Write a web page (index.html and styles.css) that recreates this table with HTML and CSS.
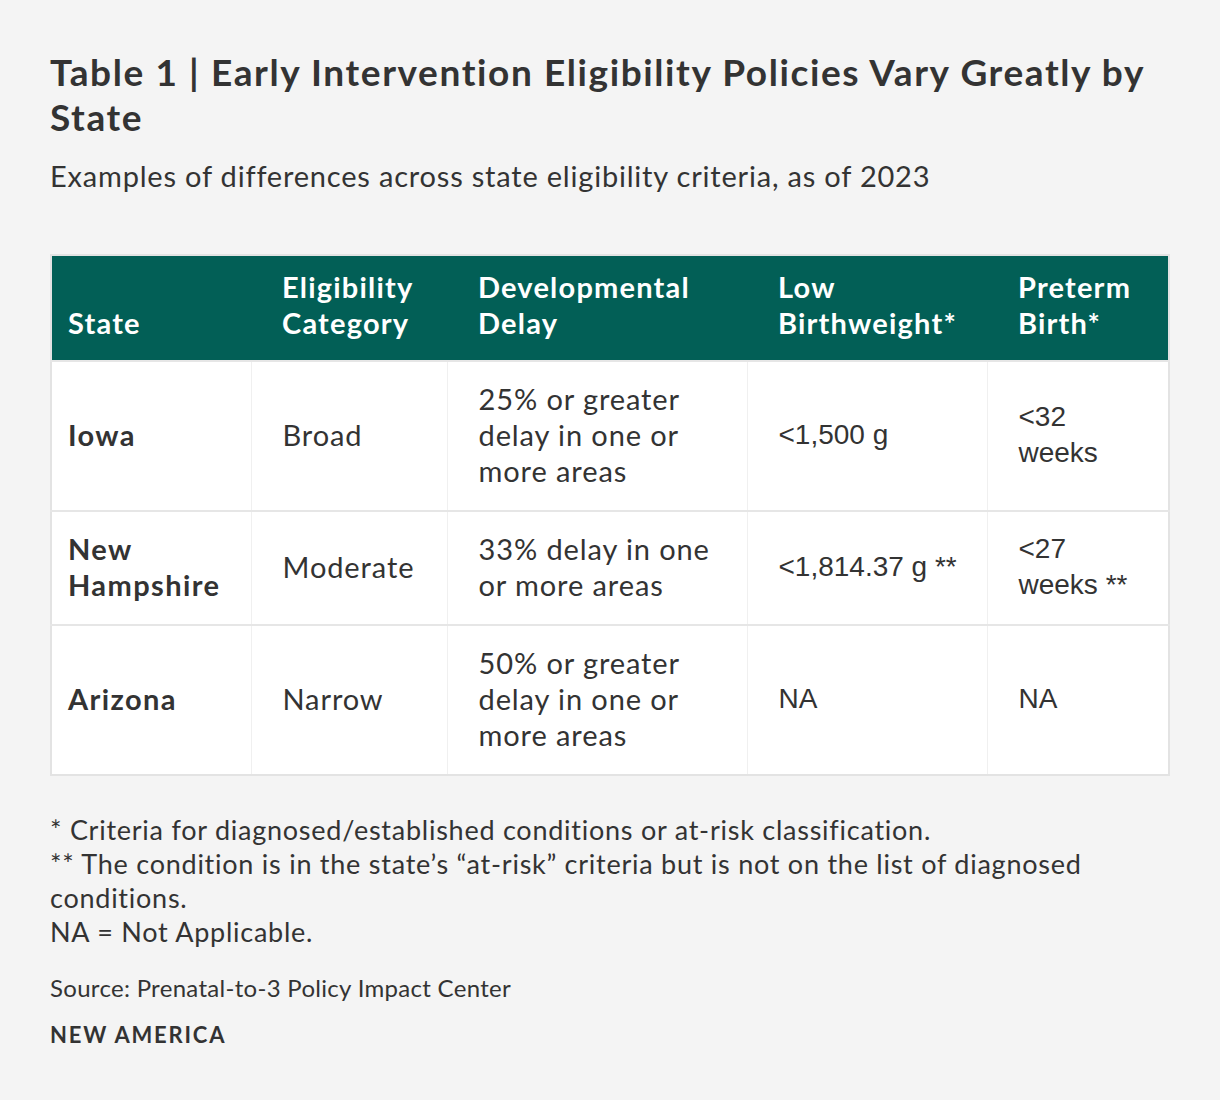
FILE: index.html
```html
<!DOCTYPE html>
<html lang="en">
<head>
<meta charset="utf-8">
<title>Table 1 | Early Intervention Eligibility Policies Vary Greatly by State</title>
<link rel="stylesheet" href="styles.css">
</head>
<body>
<div class="page">
  <h1 class="title">Table 1 | Early Intervention Eligibility Policies Vary Greatly by State</h1>
  <p class="subtitle">Examples of differences across state eligibility criteria, as of 2023</p>
  <table class="data">
    <colgroup>
      <col class="c1"><col class="c2"><col class="c3"><col class="c4"><col class="c5">
    </colgroup>
    <thead>
      <tr>
        <th>State</th>
        <th>Eligibility Category</th>
        <th>Developmental Delay</th>
        <th>Low Birthweight*</th>
        <th>Preterm Birth*</th>
      </tr>
    </thead>
    <tbody>
      <tr>
        <td class="state">Iowa</td>
        <td>Broad</td>
        <td>25% or greater delay in one or more areas</td>
        <td class="num">&lt;1,500 g</td>
        <td class="num">&lt;32 weeks</td>
      </tr>
      <tr>
        <td class="state">New Hampshire</td>
        <td>Moderate</td>
        <td>33% delay in one or more areas</td>
        <td class="num">&lt;1,814.37 g **</td>
        <td class="num">&lt;27 weeks **</td>
      </tr>
      <tr>
        <td class="state">Arizona</td>
        <td>Narrow</td>
        <td>50% or greater delay in one or more areas</td>
        <td class="num">NA</td>
        <td class="num">NA</td>
      </tr>
    </tbody>
  </table>
  <div class="notes">
    <p>* Criteria for diagnosed/established conditions or at-risk classification.</p>
    <p>** The condition is in the state’s “at-risk” criteria but is not on the list of diagnosed conditions.</p>
    <p>NA = Not Applicable.</p>
  </div>
  <p class="source">Source: Prenatal-to-3 Policy Impact Center</p>
  <p class="brand">NEW AMERICA</p>
</div>
</body>
</html>
```

FILE: styles.css
```css
html, body {
  margin: 0;
  padding: 0;
  background: #f4f4f4;
}

body {
  font-family: "Lato", "Noto Sans", sans-serif;
  color: #333333;
}

.page {
  width: 1120px;
  padding: 49px 50px 40px 50px;
}

.title {
  margin: 0;
  font-size: 37px;
  line-height: 45px;
  font-weight: 700;
  letter-spacing: 1.6px;
  color: #333333;
}

.subtitle {
  margin: 19px 0 0 0;
  font-size: 29px;
  line-height: 36px;
  letter-spacing: 0.8px;
}

.data {
  margin-top: 60px;
  width: 1120px;
  table-layout: fixed;
  border-collapse: collapse;
  border: 2px solid #e3e3e3;
  background: #ffffff;
}

.c1 { width: 200px; }
.c2 { width: 196px; }
.c3 { width: 300px; }
.c4 { width: 240px; }
.c5 { width: 182px; }

.data th {
  background: #025f56;
  color: #ffffff;
  font-weight: 700;
  font-size: 29px;
  line-height: 36px;
  letter-spacing: 1.2px;
  text-align: left;
  vertical-align: bottom;
  padding: 13px 16px 19px 31px;
}

.data td {
  font-size: 29px;
  line-height: 36px;
  letter-spacing: 0.9px;
  vertical-align: middle;
  padding: 19px 16px 21px 31px;
  border-left: 1px solid #f0f0f0;
  border-top: 2px solid #e6e6e6;
}

.data th:first-child,
.data td:first-child {
  padding-left: 16px;
  border-left: none;
}

.data td.state {
  font-weight: 700;
  letter-spacing: 1.4px;
}

.data td.num {
  font-family: "Liberation Sans", Arial, sans-serif;
  font-size: 28px;
  letter-spacing: 0;
}

.notes {
  margin-top: 37px;
}

.notes p {
  margin: 0;
  font-size: 27px;
  line-height: 34px;
  letter-spacing: 0.75px;
}

.source {
  margin: 24px 0 0 0;
  font-size: 24px;
  line-height: 30px;
  letter-spacing: 0.3px;
}

.brand {
  margin: 17px 0 0 0;
  font-size: 22px;
  line-height: 30px;
  font-weight: 700;
  letter-spacing: 1.8px;
}
```
